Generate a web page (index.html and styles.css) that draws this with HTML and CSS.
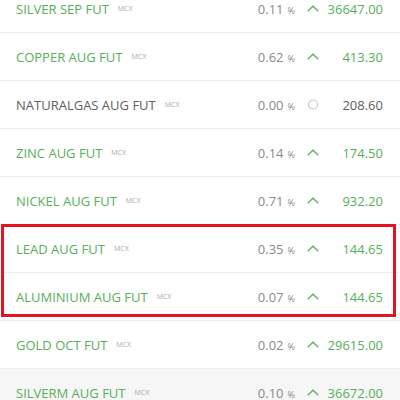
FILE: index.html
```html
<!DOCTYPE html>
<html>
<head>
<meta charset="utf-8">
<link rel="stylesheet" href="styles.css">
</head>
<body>
<div class="list">
  <div class="row up"><div class="name">SILVER SEP FUT<span class="ex">MCX</span></div><div class="pct">0.11<span class="ps">%</span></div><div class="ic"><svg width="12" height="7" viewBox="0 0 12 7"><polyline points="0.7,6.3 6,1.2 11.3,6.3" fill="none" stroke="#55b059" stroke-width="1.2"/></svg></div><div class="price">36647.00</div></div>
  <div class="row up"><div class="name">COPPER AUG FUT<span class="ex">MCX</span></div><div class="pct">0.62<span class="ps">%</span></div><div class="ic"><svg width="12" height="7" viewBox="0 0 12 7"><polyline points="0.7,6.3 6,1.2 11.3,6.3" fill="none" stroke="#55b059" stroke-width="1.2"/></svg></div><div class="price">413.30</div></div>
  <div class="row flat"><div class="name">NATURALGAS AUG FUT<span class="ex">MCX</span></div><div class="pct">0.00<span class="ps">%</span></div><div class="ic"><svg width="12" height="11" viewBox="0 0 12 11"><circle cx="6" cy="5.5" r="4.5" fill="none" stroke="#c8c8c8" stroke-width="1.2"/></svg></div><div class="price">208.60</div></div>
  <div class="row up"><div class="name">ZINC AUG FUT<span class="ex">MCX</span></div><div class="pct">0.14<span class="ps">%</span></div><div class="ic"><svg width="12" height="7" viewBox="0 0 12 7"><polyline points="0.7,6.3 6,1.2 11.3,6.3" fill="none" stroke="#55b059" stroke-width="1.2"/></svg></div><div class="price">174.50</div></div>
  <div class="row up"><div class="name">NICKEL AUG FUT<span class="ex">MCX</span></div><div class="pct">0.71<span class="ps">%</span></div><div class="ic"><svg width="12" height="7" viewBox="0 0 12 7"><polyline points="0.7,6.3 6,1.2 11.3,6.3" fill="none" stroke="#55b059" stroke-width="1.2"/></svg></div><div class="price">932.20</div></div>
  <div class="row up"><div class="name">LEAD AUG FUT<span class="ex">MCX</span></div><div class="pct">0.35<span class="ps">%</span></div><div class="ic"><svg width="12" height="7" viewBox="0 0 12 7"><polyline points="0.7,6.3 6,1.2 11.3,6.3" fill="none" stroke="#55b059" stroke-width="1.2"/></svg></div><div class="price">144.65</div></div>
  <div class="row up"><div class="name">ALUMINIUM AUG FUT<span class="ex">MCX</span></div><div class="pct">0.07<span class="ps">%</span></div><div class="ic"><svg width="12" height="7" viewBox="0 0 12 7"><polyline points="0.7,6.3 6,1.2 11.3,6.3" fill="none" stroke="#55b059" stroke-width="1.2"/></svg></div><div class="price">144.65</div></div>
  <div class="row up"><div class="name">GOLD OCT FUT<span class="ex">MCX</span></div><div class="pct">0.02<span class="ps">%</span></div><div class="ic"><svg width="12" height="7" viewBox="0 0 12 7"><polyline points="0.7,6.3 6,1.2 11.3,6.3" fill="none" stroke="#55b059" stroke-width="1.2"/></svg></div><div class="price">29615.00</div></div>
  <div class="row up hover"><div class="name">SILVERM AUG FUT<span class="ex">MCX</span></div><div class="pct">0.10<span class="ps">%</span></div><div class="ic"><svg width="12" height="7" viewBox="0 0 12 7"><polyline points="0.7,6.3 6,1.2 11.3,6.3" fill="none" stroke="#55b059" stroke-width="1.2"/></svg></div><div class="price">36672.00</div></div>
  <div class="highlight"></div>
</div>
</body>
</html>
```
FILE: styles.css
```css
html, body {
  margin: 0;
  padding: 0;
  background: #fff;
  overflow: hidden;
}
body {
  font-family: "Open Sans", "Liberation Sans", sans-serif;
}
.list {
  position: relative;
  margin-top: -15px;
}
.row {
  display: flex;
  align-items: center;
  height: 47px;
  border-bottom: 1px solid #eeeeee;
  padding: 0 17px 0 16px;
  font-size: 13px;
}
.row.hover {
  background: #f6f6f6;
}
.name {
  flex: 1;
  display: flex;
  align-items: center;
  white-space: nowrap;
}
.up .name, .up .price {
  color: #55b059;
}
.flat .name, .flat .price {
  color: #606060;
}
.ex {
  font-size: 7px;
  color: #aaa;
  margin-left: 9px;
}
.pct {
  color: #8a8a8a;
  text-align: right;
  white-space: nowrap;
}
.ps {
  font-size: 9px;
  margin-left: 4px;
}
.ic {
  width: 12px;
  margin-left: 12px;
  display: flex;
  align-items: center;
  justify-content: center;
}
.ic svg {
  display: block;
}
.price {
  width: 64px;
  text-align: right;
}
.highlight {
  position: absolute;
  left: 1px;
  top: 239px;
  width: 389px;
  height: 87px;
  border: 3px solid #e3141e;
}
```
